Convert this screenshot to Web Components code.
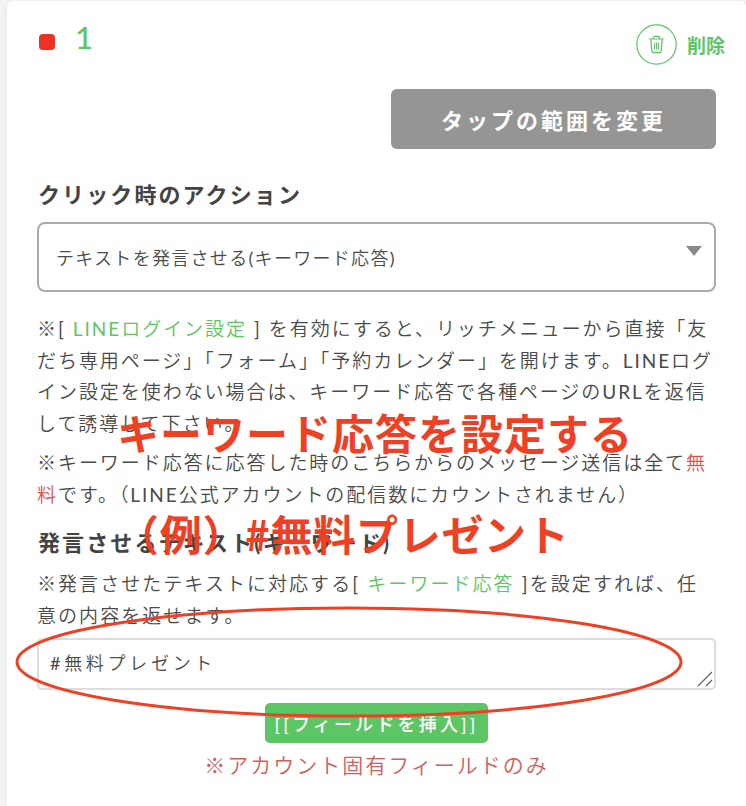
<!DOCTYPE html>
<html lang="ja">
<head>
<meta charset="utf-8">
<style>
  html, body { margin: 0; padding: 0; background: #f4f4f4; }
  body { width: 746px; height: 806px; overflow: hidden; font-family: Lato, "Noto Sans CJK JP", sans-serif; color: #4a4a4a; }
  /* latin runs stay regular, Lato has nothing between 300 and 400 */
  i { font-style: normal; font-weight: 400; }
</style>
</head>
<body>
<action-card>
  <card-head slot="head" num="1"></card-head>
  <tap-button>タップの範囲を変更</tap-button>
  <field-label style="margin-top:30px">クリック時のアクション</field-label>
  <select-box style="margin-top:11px">テキストを発言させる<i>(</i>キーワード応答<i>)</i></select-box>
  <help-text style="margin-top:21px">※<i>[</i> <a><i>LINE</i>ログイン設定</a> <i>]</i> を有効にすると、リッチメニューから直接「友だち専用ページ」「フォーム」「予約カレンダー」を開けます。<i>LINE</i>ログイン設定を使わない場合は、キーワード応答で各種ページの<i>URL</i>を返信して誘導して下さい。</help-text>
  <help-text style="margin-top:7px">※キーワード応答に応答した時のこちらからのメッセージ送信は全て<b>無料</b>です。（<i>LINE</i>公式アカウントの配信数にカウントされません）</help-text>
  <field-label style="margin-top:17px">発言させるテキスト(キーワード)</field-label>
  <help-text style="margin-top:9px;letter-spacing:2.05px">※発言させたテキストに対応する<i>[</i> <a>キーワード応答</a> <i>]</i>を設定すれば、任<br>意の内容を返せます。</help-text>
  <text-box style="margin-top:6px"><i>#</i>無料プレゼント</text-box>
  <insert-button style="margin-top:13px">[[フィールドを挿入]]</insert-button>
  <red-note style="margin-top:6px">※アカウント固有フィールドのみ</red-note>
</action-card>
<note-overlay></note-overlay>

<script>
function shadow(el, html) {
  el.attachShadow({ mode: "open" }).innerHTML = html;
}

class ActionCard extends HTMLElement {
  connectedCallback() {
    shadow(this, `<style>
      :host { display: block; margin: 1px 0 0 7px; background: #fff; height: 805px; border-radius: 6px 6px 0 0;
        box-shadow: 0 0 6px rgba(0,0,0,.06); box-sizing: border-box; padding: 23px 30px 0 30px; }
    </style><slot name="head"></slot><slot></slot>`);
  }
}

class CardHead extends HTMLElement {
  connectedCallback() {
    shadow(this, `<style>
      :host { display: flex; align-items: flex-start; height: 65px; }
      .dot { width: 16px; height: 16px; background: #ee3124; border-radius: 4px; margin: 10px 0 0 2px; }
      .num { color: #5cc665; font: 500 31px/30px Lato, sans-serif; margin: -2px 0 0 20px; }
      .del { margin-left: auto; display: flex; align-items: center; gap: 10px; margin-top: 0; margin-right: -9px; color: #5cc665;
        font: 700 19px/1 "Noto Sans CJK JP", sans-serif; }
      svg { display: block; }
    </style>
    <span class="dot"></span><span class="num">${this.getAttribute("num")}</span>
    <span class="del">
      <svg width="41" height="41" viewBox="0 0 41 41" fill="none" stroke="#5cc665">
        <circle cx="20.5" cy="20.5" r="19.7" stroke-width="1.2"/>
        <path d="M13.5 15h14M17.5 15v-1.6q0-1 1-1h4q1 0 1 1V15" stroke-width="1.2"/>
        <path d="M14.8 15l1 12q.1 1.5 1.5 1.5h6.4q1.4 0 1.5-1.5l1-12" stroke-width="1.3"/>
        <path d="M18.4 18.5v7M20.5 18.5v7M22.6 18.5v7" stroke-width="1"/>
      </svg>
      <span>削除</span>
    </span>`);
  }
}

class TapButton extends HTMLElement {
  connectedCallback() {
    shadow(this, `<style>
      :host { display: flex; align-items: center; justify-content: center; box-sizing: border-box; width: 325px; height: 60px; margin-left: auto;
        background: #959595; border-radius: 6px; color: #fff; font-size: 22px; font-weight: 700; letter-spacing: 3px; }
    </style><slot></slot>`);
  }
}

class FieldLabel extends HTMLElement {
  connectedCallback() {
    shadow(this, `<style>
      :host { display: block; margin-left: 1px; font-size: 22px; font-weight: 700; line-height: 32px; letter-spacing: 2.1px; color: #444; white-space: nowrap; }
    </style><slot></slot>`);
  }
}

class SelectBox extends HTMLElement {
  connectedCallback() {
    shadow(this, `<style>
      :host { display: flex; align-items: center; box-sizing: border-box; height: 70px; padding: 0 12px 0 17px;
        border: 2px solid #aaa; border-radius: 8px; font-size: 18px; font-weight: 350; letter-spacing: 1.3px; color: #4a4a4a; }
      .txt { flex: 1; }
      .arrow { width: 0; height: 0; border: 8px solid transparent; border-top: 10px solid #8a8a8a; border-bottom: 0; margin-top: -12px; }
    </style><span class="txt"><slot></slot></span><span class="arrow"></span>`);
  }
}

class HelpText extends HTMLElement {
  connectedCallback() {
    shadow(this, `<style>
      :host { display: block; font-size: 19px; font-weight: 350; line-height: 31.7px; letter-spacing: 1.95px; color: #4a4a4a; }
      ::slotted(a) { color: #5cc665; }
      ::slotted(b) { color: #d9534f; font-weight: 350; }
    </style><slot></slot>`);
  }
}

class TextBox extends HTMLElement {
  connectedCallback() {
    shadow(this, `<style>
      :host { display: block; position: relative; box-sizing: border-box; height: 52px; padding: 0 11px;
        border: 2px solid #ddd; border-radius: 5px; font-size: 18px; font-weight: 350; line-height: 46px; letter-spacing: 3.7px; color: #4a4a4a; }
      svg { position: absolute; right: 1px; bottom: 1px; }
    </style><slot></slot>
    <svg width="16" height="16" viewBox="0 0 16 16" stroke="#666" stroke-width="1.3" fill="none"><path d="M1 15L15 1M9 15l6-6"/></svg>`);
  }
}

class InsertButton extends HTMLElement {
  connectedCallback() {
    shadow(this, `<style>
      :host { display: flex; align-items: center; justify-content: center; box-sizing: border-box; width: 223px; height: 40px; margin: 0 auto;
        background: #5cc665; border-radius: 5px; color: #fff; font-size: 18px; font-weight: 500; letter-spacing: 3.2px; white-space: nowrap; }
    </style><slot></slot>`);
  }
}

class RedNote extends HTMLElement {
  connectedCallback() {
    shadow(this, `<style>
      :host { display: block; text-align: center; font-size: 21px; font-weight: 350; line-height: 32px; letter-spacing: 2px; color: #d0605f; }
    </style><slot></slot>`);
  }
}

// annotation drawn on top of the screenshot, so it floats over everything
class NoteOverlay extends HTMLElement {
  connectedCallback() {
    shadow(this, `<style>
      :host { position: absolute; left: 0; top: 0; width: 746px; height: 806px; pointer-events: none; color: #ee4025;
        font-family: "Noto Sans CJK JP", sans-serif; font-weight: 700; font-size: 42px; line-height: 60px; white-space: nowrap; }
      div { position: absolute; }
      .a { left: 117px; top: 402px; letter-spacing: 1px; }
      .b { left: 117px; top: 503px; letter-spacing: .7px; }
      svg { position: absolute; left: 0; top: 0; }
    </style>
    <div class="a">キーワード応答を設定する</div>
    <div class="b">（例）#無料プレゼント</div>
    <svg width="746" height="806" fill="none"><ellipse cx="349" cy="662" rx="332" ry="54" stroke="#ee4025" stroke-width="3"/></svg>`);
  }
}

customElements.define("action-card", ActionCard);
customElements.define("card-head", CardHead);
customElements.define("tap-button", TapButton);
customElements.define("field-label", FieldLabel);
customElements.define("select-box", SelectBox);
customElements.define("help-text", HelpText);
customElements.define("text-box", TextBox);
customElements.define("insert-button", InsertButton);
customElements.define("red-note", RedNote);
customElements.define("note-overlay", NoteOverlay);
</script>
</body>
</html>
